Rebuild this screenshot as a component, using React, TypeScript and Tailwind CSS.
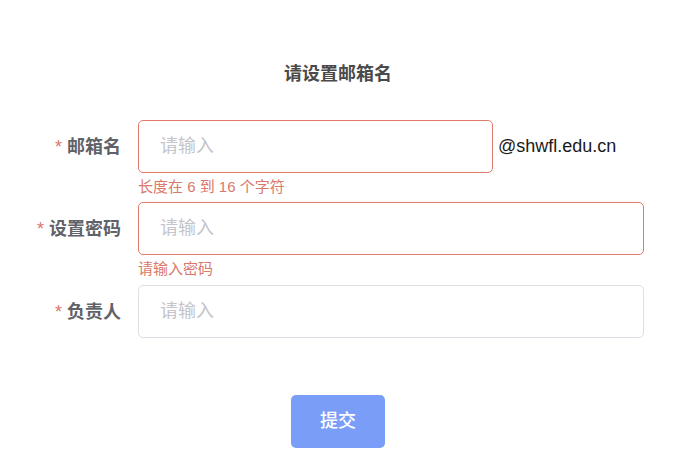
import React from 'react';

const CJK = '"Liberation Sans", "Noto Sans CJK SC", sans-serif';

function Label({ text }: { text: string }) {
  return (
    <div className="w-[138px] shrink-0 h-[53px] flex items-center justify-end pr-[17px]">
      <span className="text-[#d9786b] text-[18px] mr-[5px] leading-none">*</span>
      <span className="text-[18px] font-bold text-[#5f6268] leading-none">{text}</span>
    </div>
  );
}

function Field({
  label,
  error,
  suffix,
  narrow,
  gap,
}: {
  label: string;
  error?: string;
  suffix?: string;
  narrow?: boolean;
  gap: string;
}) {
  return (
    <div className={`flex ${gap}`}>
      <Label text={label} />
      <div className="relative flex-1 mr-[38px] flex items-center">
        <input
          placeholder="请输入"
          className={`h-[53px] rounded-[5px] border bg-white px-[21px] text-[18px] outline-none placeholder:text-[#c3c5cb] ${
            narrow ? 'w-[355px]' : 'w-full'
          } ${error ? 'border-[#de7b6d]' : 'border-[#dcdfe6]'}`}
        />
        {suffix && <span className="ml-[5px] text-[18px] text-[#1a1a1a]">{suffix}</span>}
        {error && (
          <div className="absolute left-0 top-full pt-[6px] text-[15px] leading-none text-[#d9786b]">
            {error}
          </div>
        )}
      </div>
    </div>
  );
}

export default function App() {
  return (
    <div className="w-[682px] h-[472px] bg-white" style={{ fontFamily: CJK }}>
      <div className="w-[676px] pt-[65px]">
        <h1 className="text-center text-[18px] font-bold leading-none text-[#4a4a4a]">请设置邮箱名</h1>
      </div>
      <form className="pt-[37px]" onSubmit={(e) => e.preventDefault()}>
        <Field label="邮箱名" error="长度在 6 到 16 个字符" suffix="@shwfl.edu.cn" narrow gap="mb-[29px]" />
        <Field label="设置密码" error="请输入密码" gap="mb-[30px]" />
        <Field label="负责人" gap="mb-[30px]" />
        <div className="w-[676px] flex justify-center pt-[27px]">
          <button
            type="submit"
            className="w-[94px] h-[53px] rounded-[5px] bg-[#7a9ef8] text-white text-[18px] font-medium"
          >
            提交
          </button>
        </div>
      </form>
    </div>
  );
}
